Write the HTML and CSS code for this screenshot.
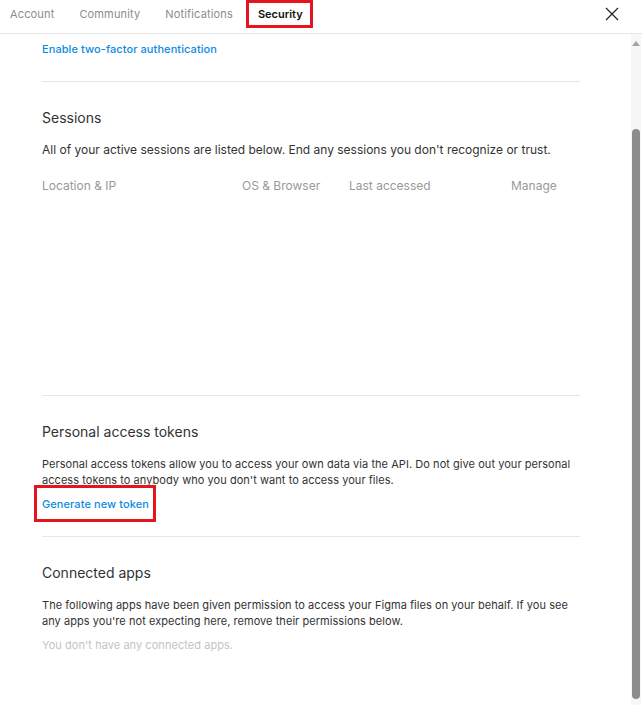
FILE: index.html
```html
<!DOCTYPE html>
<html lang="en">
<head>
    <meta charset="UTF-8">
    <meta name="viewport" content="width=device-width, initial-scale=1.0">
    <title>Settings - Security</title>
    <link rel="stylesheet" href="styles.css">
</head>
<body>
    <div class="modal">
        <div class="tabs">
            <button class="tab">Account</button>
            <button class="tab">Community</button>
            <button class="tab">Notifications</button>
            <button class="tab active marked">Security</button>
            <button class="close" aria-label="Close">
                <svg width="14" height="14" viewBox="0 0 14 14"><path d="M1 1L13 13M13 1L1 13" stroke="#222" stroke-width="1.2" fill="none"/></svg>
            </button>
        </div>
        <div class="body">
            <div class="content">
                <div class="section first">
                    <a class="link" href="#">Enable two-factor authentication</a>
                </div>
                <div class="section">
                    <h2>Sessions</h2>
                    <p class="lead">All of your active sessions are listed below. End any sessions you don't recognize or trust.</p>
                    <div class="sessions-head">
                        <span>Location &amp; IP</span>
                        <span>OS &amp; Browser</span>
                        <span>Last accessed</span>
                        <span>Manage</span>
                    </div>
                    <div class="sessions-list"></div>
                </div>
                <div class="section">
                    <h2>Personal access tokens</h2>
                    <p>Personal access tokens allow you to access your own data via the API. Do not give out your personal access tokens to anybody who you don't want to access your files.</p>
                    <a class="link marked" href="#">Generate new token</a>
                </div>
                <div class="section last">
                    <h2>Connected apps</h2>
                    <p>The following apps have been given permission to access your Figma files on your behalf. If you see any apps you're not expecting here, remove their permissions below.</p>
                    <p class="empty">You don't have any connected apps.</p>
                </div>
            </div>
            <div class="scrollbar">
                <span class="arrow"></span>
                <span class="thumb"></span>
            </div>
        </div>
    </div>
</body>
</html>
```

FILE: styles.css
```css
body {
    margin: 0;
    font-family: Inter, "Noto Sans", sans-serif;
    font-size: 11px;
    letter-spacing: 0.05px;
    color: #333;
    background-color: white;
}
.modal {
    width: 642px;
    height: 705px;
    display: flex;
    flex-direction: column;
    overflow: hidden;
}
.tabs {
    height: 33px;
    border-bottom: 1px solid #e6e6e6;
    display: flex;
    align-items: flex-start;
    padding-left: 10px;
    gap: 25px;
    flex-shrink: 0;
}
.tab {
    background: none;
    border: none;
    font-family: inherit;
    font-size: 11px;
    letter-spacing: 0.15px;
    color: #8c8c8c;
    padding: 0;
    height: 28px;
    line-height: 28px;
    cursor: pointer;
}
.tab.active {
    color: #111;
    font-weight: 600;
    letter-spacing: 0;
}
.marked {
    outline: 3px solid #e3151f;
    outline-offset: -3px;
}
.tab.marked {
    padding: 0 10px 0 12px;
    margin-left: -12px;
}
.close {
    margin-left: auto;
    margin-right: 23px;
    margin-top: 7px;
    background: none;
    border: none;
    padding: 0;
    display: flex;
    cursor: pointer;
}
.body {
    flex: 1;
    display: flex;
    min-height: 0;
}
.content {
    flex: 1;
    padding: 0 51px 0 42px;
}
.section {
    padding: 26px 0 24px;
    border-bottom: 1px solid #e6e6e6;
}
.section.first {
    padding-top: 7px;
}
.section.last {
    border-bottom: none;
}
h2 {
    font-size: 14px;
    font-weight: 400;
    line-height: 20px;
    letter-spacing: 0;
    margin: 0 0 14px;
    color: #333;
}
p {
    margin: 0;
    line-height: 16px;
}
.lead {
    font-size: 12px;
    letter-spacing: 0;
}
.link {
    display: inline-block;
    color: #0d8be0;
    font-weight: 500;
    letter-spacing: 0.08px;
    text-decoration: none;
    line-height: 16px;
}
p + .link,
p + .empty {
    margin-top: 8px;
}
.link.marked {
    padding: 11px 7px 10px 8px;
    margin: -3px 0 -10px -8px;
}
.empty {
    color: #c4c4c4;
}
.sessions-head {
    display: grid;
    grid-template-columns: 200px 107px 162px 1fr;
    margin-top: 20px;
    font-size: 12px;
    letter-spacing: 0;
    line-height: 16px;
    color: #999;
}
.sessions-list {
    height: 177px;
}
.scrollbar {
    width: 10px;
    margin-right: 1px;
    background-color: #f7f7f7;
    display: flex;
    flex-direction: column;
    align-items: center;
    padding-top: 7px;
    gap: 83px;
}
.arrow {
    width: 0;
    height: 0;
    border-left: 4px solid transparent;
    border-right: 4px solid transparent;
    border-bottom: 5px solid #a3a3a3;
}
.thumb {
    width: 8px;
    flex: 1;
    margin-bottom: 6px;
    background-color: #8c8c8c;
    border-radius: 4px;
}
```
